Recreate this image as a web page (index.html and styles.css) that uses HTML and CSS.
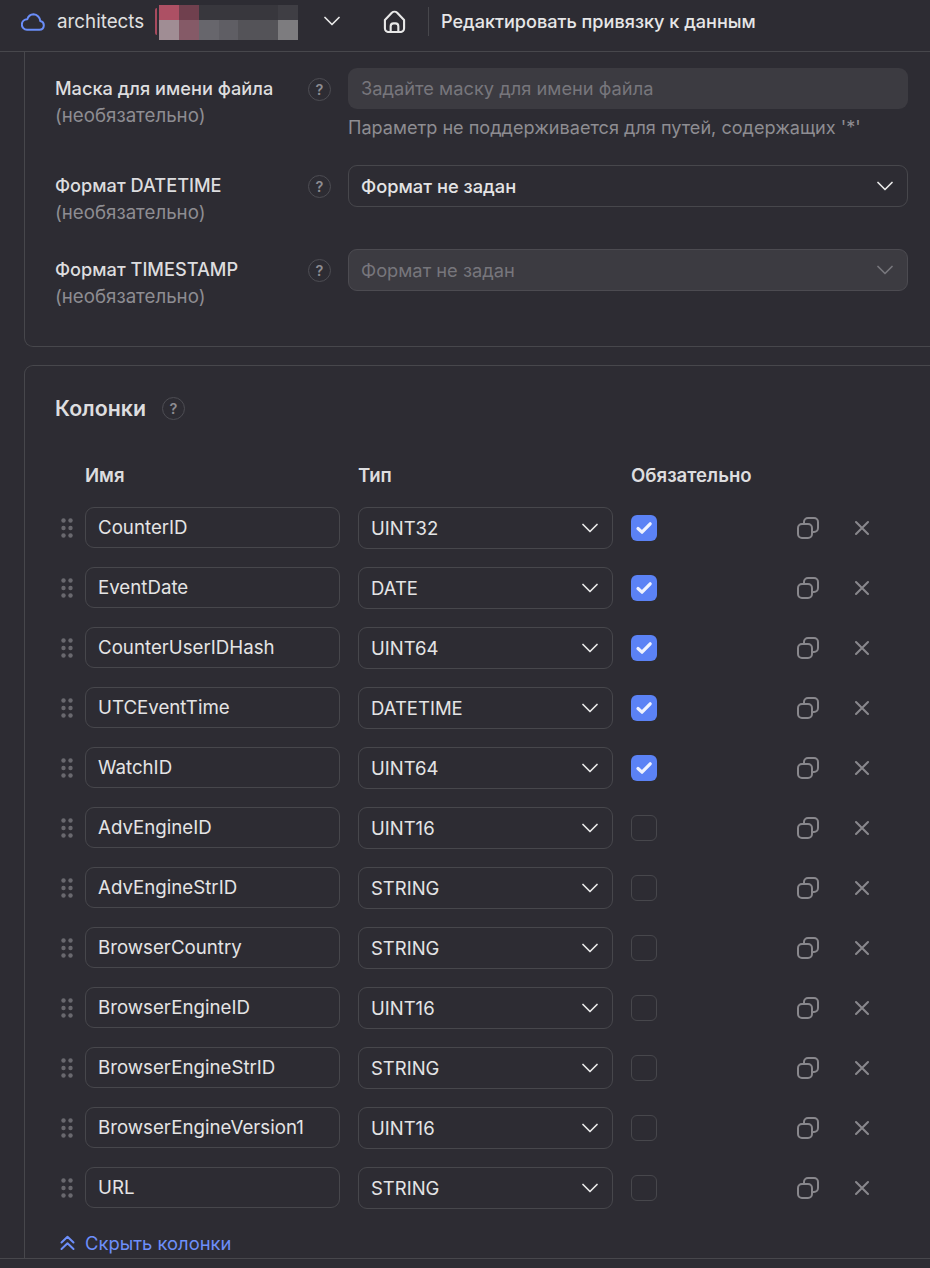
FILE: index.html
```html
<!DOCTYPE html>
<html lang="ru">
<head>
<meta charset="utf-8">
<title>Редактировать привязку к данным</title>
<link rel="stylesheet" href="styles.css">
</head>
<body>
<svg class="defs" width="0" height="0" aria-hidden="true">
  <symbol id="chev" viewBox="0 0 16 10"><path d="M1 1.5 8 8.5 15 1.5" fill="none" stroke="currentColor" stroke-width="1.7" stroke-linecap="round" stroke-linejoin="round"/></symbol>
  <symbol id="dots" viewBox="0 0 12 20"><g fill="currentColor"><circle cx="2.5" cy="2.5" r="2.2"/><circle cx="9.5" cy="2.5" r="2.2"/><circle cx="2.5" cy="10" r="2.2"/><circle cx="9.5" cy="10" r="2.2"/><circle cx="2.5" cy="17.5" r="2.2"/><circle cx="9.5" cy="17.5" r="2.2"/></g></symbol>
  <symbol id="check" viewBox="0 0 26 26"><path d="M7 13.5 11 17.2 19.2 8.8" fill="none" stroke="currentColor" stroke-width="3.2" stroke-linecap="round" stroke-linejoin="round"/></symbol>
  <symbol id="copy" viewBox="0 0 22 22"><g fill="none" stroke="currentColor" stroke-width="2"><rect x="1" y="7" width="14" height="14" rx="4"/><path d="M7 7V5a4 4 0 0 1 4-4h6a4 4 0 0 1 4 4v6a4 4 0 0 1-4 4h-2"/></g></symbol>
  <symbol id="cross" viewBox="0 0 16 16"><path d="M2 2 14 14M14 2 2 14" fill="none" stroke="currentColor" stroke-width="2.1" stroke-linecap="round"/></symbol>
</svg>

<header class="topbar">
  <svg class="cloud" viewBox="0 0 24 18"><path d="M6 16.8h12.5a4.4 4.4 0 0 0 .8-8.7A7.2 7.2 0 0 0 12.6 1.300 7 7 0 0 0 6.300 6.200 5.300 5.300 0 0 0 6 16.800Z" fill="none" stroke="#6a8df8" stroke-width="2" stroke-linejoin="round"/></svg>
  <span class="org">architects</span>
  <span class="redact-edge"></span>
  <div class="redact">
    <i class="c1"></i><i class="c2"></i><i class="c3"></i><i class="c3"></i><i class="c3"></i><i class="c3"></i><i class="c4"></i>
    <i class="c5"></i><i class="c6"></i><i class="c7"></i><i class="c8"></i><i class="c9"></i><i class="c9"></i><i class="c10"></i>
  </div>
  <svg class="org-chev"><use href="#chev"/></svg>
  <svg class="home" viewBox="0 0 24 24"><g fill="none" stroke="#e8e8e8" stroke-width="2.2" stroke-linejoin="round"><path d="M2 10.500 9.200 2.900a4 4 0 0 1 5.600 0L22 10.500V19a4 4 0 0 1-4 4H6a4 4 0 0 1-4-4Z"/><path d="M8 23v-6a3 3 0 0 1 3-3h2a3 3 0 0 1 3 3v6"/></g></svg>
  <span class="bar-sep"></span>
  <span class="crumb">Редактировать привязку к данным</span>
</header>

<main class="content">
  <section class="card card-top">
    <div class="form-row row-mask">
      <div class="form-label"><div class="label">Маска для имени файла</div><div class="optional">(необязательно)</div></div>
      <span class="help">?</span>
      <div class="form-field">
        <div class="field field-filled">Задайте маску для имени файла</div>
        <div class="hint">Параметр не поддерживается для путей, содержащих '*'</div>
      </div>
    </div>
    <div class="form-row row-dt">
      <div class="form-label"><div class="label">Формат DATETIME</div><div class="optional">(необязательно)</div></div>
      <span class="help">?</span>
      <div class="form-field">
        <div class="field field-select">Формат не задан<svg class="sel-chev"><use href="#chev"/></svg></div>
      </div>
    </div>
    <div class="form-row row-ts">
      <div class="form-label"><div class="label">Формат TIMESTAMP</div><div class="optional">(необязательно)</div></div>
      <span class="help">?</span>
      <div class="form-field">
        <div class="field field-select field-disabled">Формат не задан<svg class="sel-chev"><use href="#chev"/></svg></div>
      </div>
    </div>
  </section>

  <section class="card card-cols">
    <div class="cols-title"><h2>Колонки</h2><span class="help">?</span></div>
    <div class="cols-head"><span>Имя</span><span>Тип</span><span>Обязательно</span></div>

    <div class="col-row"><svg class="drag"><use href="#dots"/></svg><div class="cell-name">CounterID</div><div class="cell-type">UINT32<svg class="sel-chev"><use href="#chev"/></svg></div><span class="box on"><svg><use href="#check"/></svg></span><svg class="copy"><use href="#copy"/></svg><svg class="cross"><use href="#cross"/></svg></div>
    <div class="col-row"><svg class="drag"><use href="#dots"/></svg><div class="cell-name">EventDate</div><div class="cell-type">DATE<svg class="sel-chev"><use href="#chev"/></svg></div><span class="box on"><svg><use href="#check"/></svg></span><svg class="copy"><use href="#copy"/></svg><svg class="cross"><use href="#cross"/></svg></div>
    <div class="col-row"><svg class="drag"><use href="#dots"/></svg><div class="cell-name">CounterUserIDHash</div><div class="cell-type">UINT64<svg class="sel-chev"><use href="#chev"/></svg></div><span class="box on"><svg><use href="#check"/></svg></span><svg class="copy"><use href="#copy"/></svg><svg class="cross"><use href="#cross"/></svg></div>
    <div class="col-row"><svg class="drag"><use href="#dots"/></svg><div class="cell-name">UTCEventTime</div><div class="cell-type">DATETIME<svg class="sel-chev"><use href="#chev"/></svg></div><span class="box on"><svg><use href="#check"/></svg></span><svg class="copy"><use href="#copy"/></svg><svg class="cross"><use href="#cross"/></svg></div>
    <div class="col-row"><svg class="drag"><use href="#dots"/></svg><div class="cell-name">WatchID</div><div class="cell-type">UINT64<svg class="sel-chev"><use href="#chev"/></svg></div><span class="box on"><svg><use href="#check"/></svg></span><svg class="copy"><use href="#copy"/></svg><svg class="cross"><use href="#cross"/></svg></div>
    <div class="col-row"><svg class="drag"><use href="#dots"/></svg><div class="cell-name">AdvEngineID</div><div class="cell-type">UINT16<svg class="sel-chev"><use href="#chev"/></svg></div><span class="box"></span><svg class="copy"><use href="#copy"/></svg><svg class="cross"><use href="#cross"/></svg></div>
    <div class="col-row"><svg class="drag"><use href="#dots"/></svg><div class="cell-name">AdvEngineStrID</div><div class="cell-type">STRING<svg class="sel-chev"><use href="#chev"/></svg></div><span class="box"></span><svg class="copy"><use href="#copy"/></svg><svg class="cross"><use href="#cross"/></svg></div>
    <div class="col-row"><svg class="drag"><use href="#dots"/></svg><div class="cell-name">BrowserCountry</div><div class="cell-type">STRING<svg class="sel-chev"><use href="#chev"/></svg></div><span class="box"></span><svg class="copy"><use href="#copy"/></svg><svg class="cross"><use href="#cross"/></svg></div>
    <div class="col-row"><svg class="drag"><use href="#dots"/></svg><div class="cell-name">BrowserEngineID</div><div class="cell-type">UINT16<svg class="sel-chev"><use href="#chev"/></svg></div><span class="box"></span><svg class="copy"><use href="#copy"/></svg><svg class="cross"><use href="#cross"/></svg></div>
    <div class="col-row"><svg class="drag"><use href="#dots"/></svg><div class="cell-name">BrowserEngineStrID</div><div class="cell-type">STRING<svg class="sel-chev"><use href="#chev"/></svg></div><span class="box"></span><svg class="copy"><use href="#copy"/></svg><svg class="cross"><use href="#cross"/></svg></div>
    <div class="col-row"><svg class="drag"><use href="#dots"/></svg><div class="cell-name">BrowserEngineVersion1</div><div class="cell-type">UINT16<svg class="sel-chev"><use href="#chev"/></svg></div><span class="box"></span><svg class="copy"><use href="#copy"/></svg><svg class="cross"><use href="#cross"/></svg></div>
    <div class="col-row"><svg class="drag"><use href="#dots"/></svg><div class="cell-name">URL</div><div class="cell-type">STRING<svg class="sel-chev"><use href="#chev"/></svg></div><span class="box"></span><svg class="copy"><use href="#copy"/></svg><svg class="cross"><use href="#cross"/></svg></div>

    <a class="hide-link"><svg viewBox="0 0 15 16"><path d="M1.500 7.500 7.500 1.800 13.500 7.500M1.500 14 7.500 8.300 13.500 14" fill="none" stroke="currentColor" stroke-width="2" stroke-linecap="round" stroke-linejoin="round"/></svg>Скрыть колонки</a>
  </section>
</main>
<footer class="bottom"></footer>
</body>
</html>
```
FILE: styles.css
```css
* { box-sizing: border-box; }
html, body { margin: 0; height: 100%; }
body {
  width: 930px;
  height: 1268px;
  overflow: hidden;
  display: flex;
  flex-direction: column;
  background: #2d2c33;
  color: #e4e4e5;
  font-family: Inter, "Noto Sans", sans-serif;
  font-size: 18.3px;
}
.defs { position: absolute; }

.topbar {
  height: 52px;
  flex: none;
  display: flex;
  align-items: center;
  border-bottom: 1px solid #47474c;
  padding-bottom: 9px;
}
.cloud { width: 24px; height: 18px; margin-left: 21px; margin-top: 2px; flex: none; }
.org { margin-left: 12px; width: 85px; white-space: nowrap; color: #e0e0e1; font-size: 18.8px; }
.redact-edge { width: 2px; height: 27px; margin-left: 13px; margin-top: 1px; background: #a84a5e; border-radius: 2px 0 0 2px; flex: none; }
.redact {
  margin-left: 2px;
  margin-top: 3px;
  width: 139px;
  height: 35px;
  flex: none;
  display: grid;
  grid-template-columns: repeat(7, 1fr);
  grid-template-rows: 15px 20px;
}
.redact i { display: block; }
.c1 { background: #ad5064; }
.c2 { background: #70404e; }
.c3 { background: #38373d; }
.c4 { background: #3f3e44; }
.c5 { background: #a08d94; }
.c6 { background: #855a67; }
.c7 { background: #67666c; }
.c8 { background: #5f5e64; }
.c9 { background: #545358; }
.c10 { background: #7d7c7f; }
.org-chev { width: 16px; height: 10px; margin-left: 26px; color: #e8e8e8; flex: none; }
.home { width: 23px; height: 23px; margin-left: 43px; flex: none; }
.bar-sep { width: 1px; height: 29px; margin-left: 22px; background: #47474c; flex: none; }
.crumb { margin-left: 12px; font-weight: 500; white-space: nowrap; font-size: 18.1px; color: #e6e6e7; }

.content { flex: 1; min-height: 0; padding-left: 24px; overflow: hidden; }
.card {
  width: 930px;
  border: 1px solid #47474c;
  padding-left: 30px;
}
.card-top {
  height: 295px;
  border-top: 0;
  border-radius: 0 0 0 9px;
  padding-top: 16px;
}
.card-cols {
  height: 900px;
  margin-top: 18px;
  border-radius: 9px 0 0 0;
  padding-top: 30px;
  border-bottom: 0;
}

.form-row { display: flex; align-items: flex-start; }
.row-dt { margin-top: 26px; }
.row-ts { margin-top: 23px; }
.form-label { width: 253px; flex: none; padding-top: 7px; }
.label { font-weight: 500; font-size: 18.2px; white-space: nowrap; color: #dddddf; line-height: 27px; }
.optional { color: #8e8d92; font-size: 18.7px; line-height: 27px; }
.help {
  width: 23px;
  height: 23px;
  flex: none;
  border: 1.5px solid #4d4d53;
  border-radius: 50%;
  display: flex;
  align-items: center;
  justify-content: center;
  color: #8e8d92;
  font-size: 14.500px;
  font-weight: 600;
}
.form-row .help { margin-top: 10px; }
.form-field { margin-left: 17px; width: 560px; flex: none; }
.field {
  height: 41px;
  border-radius: 9px;
  padding: 0 13px 1px 12px;
  display: flex;
  align-items: center;
  justify-content: space-between;
  font-size: 18.3px;
}
.field-filled { background: #3c3b41; color: #77767c; padding-left: 13px; }
.field-select { height: 42px; border: 1px solid #47474c; color: #e4e4e5; padding: 0 14px 0 12px; font-weight: 500; }
.field-disabled { background: #3c3b41; color: #77767c; font-weight: 400; border-color: #4c4b51; }
.field-disabled .sel-chev { color: #77767c; }
.hint { margin-top: 6px; color: #8e8d92; font-size: 18.1px; line-height: 24px; white-space: nowrap; }
.sel-chev { width: 16px; height: 10px; flex: none; color: #e8e8e8; }

.cols-title { display: flex; align-items: center; height: 24px; }
.cols-title h2 { margin: 0; font-size: 21.3px; font-weight: 600; color: #dddddf; }
.cols-title .help { margin-left: 16px; }
.cols-head {
  margin-top: 43px;
  height: 24px;
  display: flex;
  align-items: center;
  padding-left: 30px;
  font-weight: 600;
  font-size: 18.6px;
  color: #dddddf;
}
.cols-head span:nth-child(1) { width: 273px; }
.cols-head span:nth-child(2) { width: 273px; }
.col-row {
  height: 60px;
  display: flex;
  align-items: flex-start;
}
.cols-head + .col-row { margin-top: 20px; }
.drag { width: 12px; height: 20px; margin: 11px 12px 0 6px; color: #69686e; flex: none; }
.cell-name, .cell-type {
  width: 255px;
  flex: none;
  border: 1px solid #47474c;
  border-radius: 9px;
  padding: 0 12px;
  display: flex;
  align-items: center;
  white-space: nowrap;
  color: #e4e4e5;
}
.cell-name { height: 41px; font-size: 18.7px; padding-bottom: 1px; }
.cell-type { height: 42px; margin-left: 18px; justify-content: space-between; padding-right: 14px; font-size: 18.5px; }
.box {
  width: 26px;
  height: 26px;
  margin: 8px 0 0 18px;
  flex: none;
  border: 1px solid #47474c;
  border-radius: 6px;
}
.box.on { background: #5b82f5; border: 0; color: #eef2ff; }
.box svg { width: 26px; height: 26px; display: block; }
.copy { width: 22px; height: 22px; margin: 10px 0 0 140px; color: #88878c; flex: none; }
.cross { width: 16px; height: 16px; margin: 13px 0 0 35px; color: #88878c; flex: none; }
.hide-link {
  display: flex;
  align-items: center;
  height: 24px;
  margin-top: 4px;
  padding-left: 30px;
  position: relative;
  color: #6d8ffa;
  font-size: 18.4px;
}
.hide-link svg { position: absolute; left: 5px; top: 4px; width: 15px; height: 16px; }

.bottom { height: 10px; flex: none; border-top: 1px solid #47474c; background: #2d2c33; }
```
